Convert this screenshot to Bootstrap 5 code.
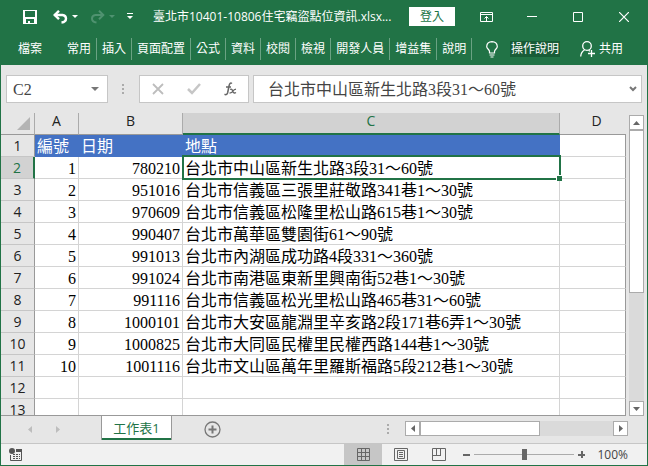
<!DOCTYPE html>
<html lang="zh-Hant">
<head>
<meta charset="utf-8">
<meta name="viewport" content="width=device-width, initial-scale=1">
<title>臺北市10401-10806住宅竊盜點位資訊.xlsx</title>
<link href="https://cdn.jsdelivr.net/npm/bootstrap@5.3.0/dist/css/bootstrap.min.css" rel="stylesheet">
<style>
:root { --xl-green: #217346; --xl-line: #d4d4d4; --xl-edge: #ababab; }
body { font: 12px/16px "Open Sans", "Noto Sans CJK TC", sans-serif; color: #444; }
button { border: 0; padding: 0; background: none; color: inherit; font: inherit; }
svg { display: block; flex: none; }
.app-window { border: solid var(--xl-green); border-width: 0 1px 1px; background: #e6e6e6; }
.title-bar, .ribbon { background: var(--xl-green); color: #fff; }
.title-bar { height: 33px; }
.quick-tools { gap: 4px; padding-left: 22px; width: 152px; }
.sign-in { background: #fff; color: var(--xl-green); width: 46px; height: 19px; }
.win-btn { width: 46px; height: 32px; }
.ribbon { height: 32px; }
.ribbon a { color: inherit; text-decoration: none; white-space: nowrap; }
.tab-file { padding: 0 20px 0 17px; }
.tab-list a { padding: 3px 5px; border-right: 1px solid #6aa283; }
.tell-me { background: #185c37; padding: 0 1px; }
.formula-row { height: 48px; padding: 10px 5px; }
.box { background: #fff; border: 1px solid #c6c6c6; height: 28px; }
.name-box { width: 102px; }
.name-box input { padding: 2px 0 0 6px; }
.fx-box { width: 110px; }
.formula-box input { padding: 2px 0 0 14px; }
.grip { margin: 0 15px 0 14px; }
.box input { border: 0; outline: 0; background: none; min-width: 0; color: #444; }
.sheet-font, .grid td { font-family: "Liberation Serif", "Noto Sans CJK TC", serif; font-size: 16px; line-height: 18px; }
.work-area { min-height: 0; }
.grid { table-layout: fixed; width: 100%; border-collapse: separate; border-spacing: 0; }
.col-head { width: 34px; }
.col-a { width: 44px; }
.col-b { width: 104px; }
.col-c { width: 377px; }
.grid th { font-weight: 400; font-size: 14px; line-height: 18px; text-align: center; padding: 0; color: #222; }
.grid tr { height: 22px; }
.grid thead th { border-right: 1px solid var(--xl-edge); border-bottom: 1px solid #999; height: 22px; line-height: 16px; vertical-align: top; }
.grid thead th:first-child { vertical-align: bottom; padding-bottom: 4px; }
.grid thead th:last-child { border-right: 0; padding-left: 7px; }
.grid thead th.picked { background: #d2d2d2; color: var(--xl-green); border-bottom: 2px solid var(--xl-green); }
.grid tbody th { border-right: 1px solid #999; border-bottom: 1px solid #c6c6c6; height: 22px; padding-top: 1px; }
.grid tbody th.picked { background: #d2d2d2; color: var(--xl-green); border-right: 2px solid var(--xl-green); }
.grid td { background: #fff; color: #000; border-right: 1px solid var(--xl-line); border-bottom: 1px solid var(--xl-line); padding: 3px 2px 0; white-space: nowrap; height: 22px; }
.grid td:nth-child(2), .grid td:nth-child(3) { text-align: right; }
.grid td:last-child { border-right-color: #999; }
.grid tr.titles td:not(:last-child) { background: #4472c4; border-color: #4472c4; color: #fff; text-align: left; }
.grid td.active-cell { position: relative; }
.active-cell::before { content: ""; position: absolute; inset: -2px -2px -2px -1px; border: 2px solid var(--xl-green); }
.active-cell::after { content: ""; position: absolute; right: -3px; bottom: -3px; width: 6px; height: 6px; background: var(--xl-green); border: solid #fff; border-width: 1px 0 0 1px; }
.grid-pane { border-bottom: 1px solid #999; }
.v-scroll { width: 15px; margin: 2px 3px 0; }
.scroll-btn { width: 15px; height: 15px; background: #fff; border: 1px solid var(--xl-edge); }
.track { background: #dadada; }
.v-thumb { height: 60%; background: #fff; border: 1px solid var(--xl-edge); }
.h-thumb { width: 62%; height: 15px; background: #fff; border: 1px solid var(--xl-edge); }
.sheet-bar { height: 28px; border-bottom: 1px solid #c6c6c6; }
.sheet-arrows { width: 100px; gap: 24px; padding-left: 27px; }
.sheet-tab { width: 71px; height: 24px; font-size: 13px; background: #fff; border: 1px solid #999; border-width: 0 1px; box-shadow: inset 0 -2px var(--xl-green); color: var(--xl-green); }
.h-scroll { width: 223px; margin-right: 19px; padding-bottom: 2px; }
.status-bar { height: 21px; background: #f1f1f1; }
.view-btn { width: 38px; }
.view-btn.picked { background: #c6c6c6; }
.zoom-group { margin: 0 19px 0 5px; }
.zoom-range { appearance: none; width: 100px; height: 13px; background: linear-gradient(#ababab, #ababab) center / 100% 1px no-repeat; }
.zoom-range::-webkit-slider-thumb { appearance: none; width: 5px; height: 11px; background: #666; }
</style>
</head>
<body>
<div class="app-window d-flex flex-column vh-100 overflow-hidden">
  <header class="title-bar d-flex align-items-center flex-shrink-0">
    <div class="quick-tools d-flex align-items-center flex-shrink-0">
      <button aria-label="儲存"><svg width="14" height="14" viewBox="0 0 14 14"><path fill="#fff" fill-rule="evenodd" d="M0 0h14v14H0zM2 1v6h10V1zM3 9v4h2v-2h2v2h4V9z"/></svg></button>
      <button class="d-flex align-items-center gap-1 ms-2 ps-1" aria-label="復原"><svg width="15" height="14" viewBox="0 0 15 14" fill="none" stroke="#fff" stroke-width="2.4"><path d="M1.500 5H9.500Q13 5.500 13 8.500Q13 12 8.500 12.500"/><path d="M6 .8L1.700 5L6 9.200"/></svg><svg width="6" height="3"><path fill="#fff" d="M0 0h6L3 3z"/></svg></button>
      <button class="d-flex align-items-center gap-1 ms-1 ps-1" aria-label="重做"><svg width="15" height="14" viewBox="0 0 15 14" fill="none" stroke="#4f9270" stroke-width="2"><path d="M13.500 5H5.500Q2 5.500 2 8.500Q2 12 6.500 12.500"/><path d="M9 .8L13.300 5L9 9.200"/></svg><svg width="6" height="3"><path fill="#4f9270" d="M0 0h6L3 3z"/></svg></button>
      <button class="ms-2" aria-label="自訂快速存取工具列"><svg width="6" height="7"><path fill="#fff" d="M0 0h6v1H0zM0 3h6L3 6z"/></svg></button>
    </div>
    <div class="flex-grow-1 text-nowrap overflow-hidden">臺北市10401-10806住宅竊盜點位資訊.xlsx...</div>
    <button class="sign-in me-2 flex-shrink-0">登入</button>
    <button class="win-btn d-flex align-items-center justify-content-center" aria-label="功能區顯示選項"><svg width="13" height="10" viewBox="0 0 13 10" fill="none" stroke="#fff"><path d="M.5.5h12v9H.5zM0 2.500h13M6.500 9V4.500M4.500 6.500L6.500 4.500L8.500 6.500"/></svg></button>
    <button class="win-btn d-flex align-items-center justify-content-center" aria-label="最小化"><svg width="10" height="1"><path fill="#fff" d="M0 0h10v1H0z"/></svg></button>
    <button class="win-btn d-flex align-items-center justify-content-center" aria-label="最大化"><svg width="10" height="10"><path fill="none" stroke="#fff" d="M.5.5h9v9h-9z"/></svg></button>
    <button class="win-btn d-flex align-items-center justify-content-center" aria-label="關閉"><svg width="10" height="10"><path stroke="#fff" stroke-width="1.200" d="M0 0l10 10M10 0L0 10"/></svg></button>
  </header>
  <nav class="ribbon d-flex align-items-center flex-shrink-0">
    <a class="tab-file" href="#">檔案</a>
    <div class="tab-list d-flex">
      <a href="#">常用</a><a href="#">插入</a><a href="#">頁面配置</a><a href="#">公式</a><a href="#">資料</a><a href="#">校閱</a><a href="#">檢視</a><a href="#">開發人員</a><a href="#">增益集</a><a href="#">說明</a>
    </div>
    <a class="d-flex align-items-center gap-2 ms-auto" href="#"><svg class="me-1" width="12" height="17" viewBox="0 0 12 17" fill="none" stroke="#fff" stroke-width="1.200"><path d="M3.500 12V10.500Q3.500 9.500 2 8Q.7 6.700.7 5.500Q1 .8 6 .7Q11 .8 11.300 5.500Q11.300 6.700 10 8Q8.500 9.500 8.500 10.500V12zM3.500 14h5M4.500 16h3"/></svg><span class="tell-me">操作說明</span></a>
    <a class="d-flex align-items-center gap-1 ms-3 me-4 ps-1" href="#"><svg width="15" height="16" viewBox="0 0 15 16" fill="none" stroke="#fff" stroke-width="1.300"><circle cx="7" cy="5" r="4.300"/><path d="M.7 15.500Q1 11 4.500 9M8.500 9.300L10 10.200M8 12.500h7M11.500 9v7"/></svg><span>共用</span></a>
  </nav>
  <div class="formula-row d-flex flex-shrink-0">
    <div class="box name-box d-flex align-items-center flex-shrink-0">
      <input class="sheet-font flex-grow-1" aria-label="名稱方塊" value="C2">
      <button class="px-1 me-1" aria-label="名稱清單"><svg width="8" height="4"><path fill="#777" d="M0 0h8L4 4z"/></svg></button>
    </div>
    <svg class="grip align-self-center" width="2" height="11" fill="#ababab"><path d="M0 0h2v2H0zM0 4h2v2H0zM0 8h2v2H0z"/></svg>
    <div class="box fx-box d-flex align-items-center justify-content-around flex-shrink-0 me-1">
      <button aria-label="取消"><svg width="12" height="12"><path stroke="#bdbdbd" stroke-width="1.800" d="M1 1l10 10M11 1L1 11"/></svg></button>
      <button aria-label="輸入"><svg width="14" height="12"><path fill="none" stroke="#c6c6c6" stroke-width="2.500" d="M1 6l4 4L13 1"/></svg></button>
      <button aria-label="插入函數"><svg width="13" height="14" viewBox="0 0 13 14" fill="none" stroke="#666"><path stroke-width="1.500" d="M8 1.500Q5.800 0 5 4L3.700 10.500Q3 13.500 .5 12.300M2 5h5"/><path stroke-width="1.300" d="M6 7.500Q8 6.500 8.700 9Q9.500 12 12 10.500M12 7.200Q10 7.500 9 9Q8 11 5.500 11.200"/></svg></button>
    </div>
    <div class="box formula-box flex-grow-1 d-flex align-items-center">
      <input class="sheet-font flex-grow-1" aria-label="資料編輯列" value="台北市中山區新生北路3段31～60號">
      <button class="px-1" aria-label="展開資料編輯列"><svg width="8" height="6"><path fill="none" stroke="#777" stroke-width="2" d="M1 1l3 3l3-3"/></svg></button>
    </div>
  </div>
  <main class="work-area d-flex flex-grow-1">
    <div class="grid-pane flex-grow-1 overflow-hidden">
      <table class="grid">
        <colgroup><col class="col-head"><col class="col-a"><col class="col-b"><col class="col-c"><col></colgroup>
        <thead><tr><th aria-label="全選"><svg class="ms-auto me-1" width="13" height="13"><path fill="#b4b4b4" d="M13 0v13H0z"/></svg></th><th>A</th><th>B</th><th class="picked">C</th><th>D</th></tr></thead>
        <tbody>
          <tr class="titles"><th>1</th><td>編號</td><td>日期</td><td>地點</td><td></td></tr>
          <tr><th class="picked">2</th><td>1</td><td>780210</td><td class="active-cell">台北市中山區新生北路3段31～60號</td><td></td></tr>
          <tr><th>3</th><td>2</td><td>951016</td><td>台北市信義區三張里莊敬路341巷1～30號</td><td></td></tr>
          <tr><th>4</th><td>3</td><td>970609</td><td>台北市信義區松隆里松山路615巷1～30號</td><td></td></tr>
          <tr><th>5</th><td>4</td><td>990407</td><td>台北市萬華區雙園街61～90號</td><td></td></tr>
          <tr><th>6</th><td>5</td><td>991013</td><td>台北市內湖區成功路4段331～360號</td><td></td></tr>
          <tr><th>7</th><td>6</td><td>991024</td><td>台北市南港區東新里興南街52巷1～30號</td><td></td></tr>
          <tr><th>8</th><td>7</td><td>991116</td><td>台北市信義區松光里松山路465巷31～60號</td><td></td></tr>
          <tr><th>9</th><td>8</td><td>1000101</td><td>台北市大安區龍淵里辛亥路2段171巷6弄1～30號</td><td></td></tr>
          <tr><th>10</th><td>9</td><td>1000825</td><td>台北市大同區民權里民權西路144巷1～30號</td><td></td></tr>
          <tr><th>11</th><td>10</td><td>1001116</td><td>台北市文山區萬年里羅斯福路5段212巷1～30號</td><td></td></tr>
          <tr><th>12</th><td></td><td></td><td></td><td></td></tr>
          <tr><th>13</th><td></td><td></td><td></td><td></td></tr>
        </tbody>
      </table>
    </div>
    <div class="v-scroll d-flex flex-column flex-shrink-0">
      <button class="scroll-btn d-flex align-items-center justify-content-center flex-shrink-0" aria-label="向上捲動"><svg width="7" height="4"><path fill="#666" d="M0 4h7L3.500 0z"/></svg></button>
      <div class="track flex-grow-1"><div class="v-thumb"></div></div>
      <button class="scroll-btn d-flex align-items-center justify-content-center flex-shrink-0" aria-label="向下捲動"><svg width="7" height="4"><path fill="#666" d="M0 0h7L3.500 4z"/></svg></button>
    </div>
  </main>
  <div class="sheet-bar d-flex flex-shrink-0">
    <div class="sheet-arrows d-flex align-items-center flex-shrink-0">
      <button aria-label="上一張"><svg width="4" height="7"><path fill="#bdbdbd" d="M4 0v7L0 3.500z"/></svg></button>
      <button aria-label="下一張"><svg width="4" height="7"><path fill="#bdbdbd" d="M0 0v7l4-3.500z"/></svg></button>
    </div>
    <button class="sheet-tab flex-shrink-0">工作表1</button>
    <button class="ms-4 ps-2" aria-label="新增工作表"><svg width="17" height="17" fill="none" stroke="#777"><circle cx="8.500" cy="8.500" r="7.500" stroke-width="1.300"/><path stroke-width="2" d="M4.500 8.500h8M8.500 4.500v8"/></svg></button>
    <svg class="ms-auto me-3 align-self-center" width="2" height="11" fill="#ababab"><path d="M0 0h2v2H0zM0 4h2v2H0zM0 8h2v2H0z"/></svg>
    <div class="h-scroll d-flex align-items-center">
      <button class="scroll-btn d-flex align-items-center justify-content-center flex-shrink-0" aria-label="向左捲動"><svg width="4" height="7"><path fill="#666" d="M4 0v7L0 3.500z"/></svg></button>
      <div class="track flex-grow-1"><div class="h-thumb"></div></div>
      <button class="scroll-btn d-flex align-items-center justify-content-center flex-shrink-0" aria-label="向右捲動"><svg width="4" height="7"><path fill="#666" d="M0 0v7l4-3.500z"/></svg></button>
    </div>
  </div>
  <footer class="status-bar d-flex align-items-stretch flex-shrink-0">
    <button class="ps-2 me-auto" aria-label="錄製巨集"><svg width="13" height="13" viewBox="0 0 13 13"><circle cx="3" cy="3" r="3" fill="#555"/><path fill="#555" d="M7 1h6v3H7z"/><path fill="none" stroke="#555" d="M1.500 7v5.500h11V4"/><path stroke="#555" stroke-dasharray="2 1" d="M4 6.500h7M4 8.500h7M4 10.500h7"/></svg></button>
    <button class="view-btn picked d-flex align-items-center justify-content-center" aria-label="標準模式"><svg width="13" height="13" fill="none" stroke="#666"><path d="M.5.5h12v12H.5zM4.500 0v13M8.500 0v13M0 4.500h13M0 8.500h13"/></svg></button>
    <button class="view-btn d-flex align-items-center justify-content-center" aria-label="整頁模式"><svg width="14" height="13" fill="none" stroke="#666"><path d="M.5.5h13v12H.5zM3.500 2.500h7v8h-7zM5 4.500h4M5 6.500h4M5 8.500h4"/></svg></button>
    <button class="view-btn d-flex align-items-center justify-content-center" aria-label="分頁預覽"><svg width="14" height="13" fill="none" stroke="#666"><path d="M.5.5h13v12H.5zM4.500 0v7.500M8.500 0v7.500M0 7.500h9"/></svg></button>
    <div class="zoom-group d-flex align-items-center">
      <button aria-label="縮小"><svg width="7" height="7"><path fill="#666" d="M0 3h7v2H0z"/></svg></button>
      <input class="zoom-range mx-1" type="range" min="0" max="100" value="50" aria-label="顯示比例">
      <button aria-label="放大"><svg width="7" height="7"><path fill="#666" d="M0 3h7v2H0zM3 0h2v7H3z"/></svg></button>
      <button class="ms-2 ps-1">100%</button>
    </div>
  </footer>
</div>
<script src="https://cdn.jsdelivr.net/npm/bootstrap@5.3.0/dist/js/bootstrap.bundle.min.js"></script>
</body>
</html>
